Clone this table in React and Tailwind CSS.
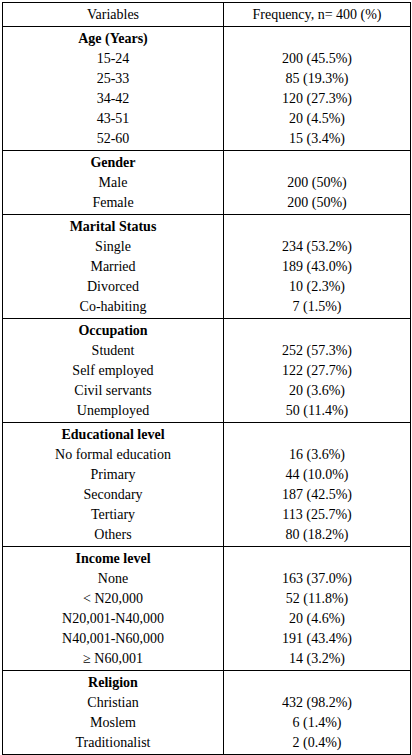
import React from "react";

const sections = [
  {
    title: "Age (Years)",
    rows: [
      ["15-24", "200 (45.5%)"],
      ["25-33", "85 (19.3%)"],
      ["34-42", "120 (27.3%)"],
      ["43-51", "20 (4.5%)"],
      ["52-60", "15 (3.4%)"],
    ],
  },
  {
    title: "Gender",
    rows: [
      ["Male", "200 (50%)"],
      ["Female", "200 (50%)"],
    ],
  },
  {
    title: "Marital Status",
    rows: [
      ["Single", "234 (53.2%)"],
      ["Married", "189 (43.0%)"],
      ["Divorced", "10 (2.3%)"],
      ["Co-habiting", "7 (1.5%)"],
    ],
  },
  {
    title: "Occupation",
    rows: [
      ["Student", "252 (57.3%)"],
      ["Self employed", "122 (27.7%)"],
      ["Civil servants", "20 (3.6%)"],
      ["Unemployed", "50 (11.4%)"],
    ],
  },
  {
    title: "Educational level",
    rows: [
      ["No formal education", "16 (3.6%)"],
      ["Primary", "44 (10.0%)"],
      ["Secondary", "187 (42.5%)"],
      ["Tertiary", "113 (25.7%)"],
      ["Others", "80 (18.2%)"],
    ],
  },
  {
    title: "Income level",
    rows: [
      ["None", "163 (37.0%)"],
      ["< N20,000", "52 (11.8%)"],
      ["N20,001-N40,000", "20 (4.6%)"],
      ["N40,001-N60,000", "191 (43.4%)"],
      ["≥ N60,001", "14 (3.2%)"],
    ],
  },
  {
    title: "Religion",
    rows: [
      ["Christian", "432 (98.2%)"],
      ["Moslem", "6 (1.4%)"],
      ["Traditionalist", "2 (0.4%)"],
    ],
  },
];

export default function App() {
  return (
    <div className="bg-white w-[412px] h-[755px] pt-[2px] pl-[2px] text-black text-[14px] leading-[20px] font-['Liberation_Serif','Times_New_Roman',serif]">
      <div className="w-[409px] border border-black">
        {/* header */}
        <div className="flex h-[23px]">
          <div className="w-[221px] border-r border-black flex items-center justify-center">
            Variables
          </div>
          <div className="flex-1 flex items-center justify-center">
            Frequency, n= 400 (%)
          </div>
        </div>
        {sections.map((s) => (
          <div key={s.title} className="flex border-t border-black">
            <div className="w-[221px] border-r border-black pt-[2px] pb-[1px] text-center">
              <div className="font-bold">{s.title}</div>
              {s.rows.map((r) => (
                <div key={r[0]}>{r[0]}</div>
              ))}
            </div>
            <div className="flex-1 pt-[2px] pb-[1px] text-center">
              <div>&nbsp;</div>
              {s.rows.map((r) => (
                <div key={r[0]}>{r[1]}</div>
              ))}
            </div>
          </div>
        ))}
      </div>
    </div>
  );
}
